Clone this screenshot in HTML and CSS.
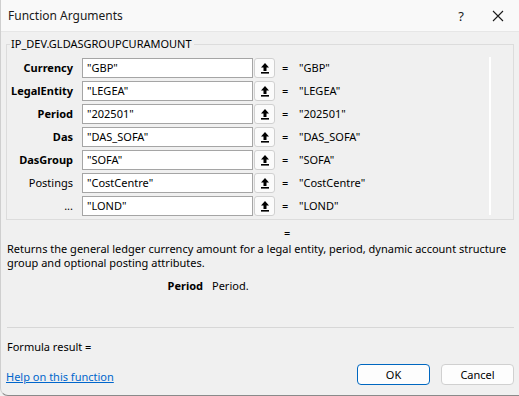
FILE: index.html
```html
<!DOCTYPE html>
<html>
<head>
<meta charset="utf-8">
<link rel="stylesheet" href="styles.css">
</head>
<body>
<div class="dialog">
  <div class="titlebar">
    <span class="title">Function Arguments</span>
    <span class="tb-help">?</span>
    <span class="tb-close"><svg width="12" height="12" viewBox="0 0 12 12"><path d="M1 1L11 11M11 1L1 11" stroke="#1a1a1a" stroke-width="1.1" fill="none"/></svg></span>
  </div>
  <div class="body">
    <fieldset class="group">
      <legend class="legend">IP_DEV.GLDASGROUPCURAMOUNT</legend>
      <div class="group-inner">
        <div class="args">
          <div class="lbl b">Currency</div><div class="inp">"GBP"</div><div class="btn"><svg width="10" height="12" viewBox="0 0 10 12"><path d="M5 1L1 5.5H3.5V9H6.5V5.5H9Z" fill="#000"/><rect x="1" y="10" width="8" height="1.6" fill="#000"/></svg></div><div class="eq">=</div><div class="val">"GBP"</div>
          <div class="lbl b">LegalEntity</div><div class="inp">"LEGEA"</div><div class="btn"><svg width="10" height="12" viewBox="0 0 10 12"><path d="M5 1L1 5.5H3.5V9H6.5V5.5H9Z" fill="#000"/><rect x="1" y="10" width="8" height="1.6" fill="#000"/></svg></div><div class="eq">=</div><div class="val">"LEGEA"</div>
          <div class="lbl b">Period</div><div class="inp">"202501"</div><div class="btn"><svg width="10" height="12" viewBox="0 0 10 12"><path d="M5 1L1 5.5H3.5V9H6.5V5.5H9Z" fill="#000"/><rect x="1" y="10" width="8" height="1.6" fill="#000"/></svg></div><div class="eq">=</div><div class="val">"202501"</div>
          <div class="lbl b">Das</div><div class="inp">"DAS_SOFA"</div><div class="btn"><svg width="10" height="12" viewBox="0 0 10 12"><path d="M5 1L1 5.5H3.5V9H6.5V5.5H9Z" fill="#000"/><rect x="1" y="10" width="8" height="1.6" fill="#000"/></svg></div><div class="eq">=</div><div class="val">"DAS_SOFA"</div>
          <div class="lbl b">DasGroup</div><div class="inp">"SOFA"</div><div class="btn"><svg width="10" height="12" viewBox="0 0 10 12"><path d="M5 1L1 5.5H3.5V9H6.5V5.5H9Z" fill="#000"/><rect x="1" y="10" width="8" height="1.6" fill="#000"/></svg></div><div class="eq">=</div><div class="val">"SOFA"</div>
          <div class="lbl">Postings</div><div class="inp">"CostCentre"</div><div class="btn"><svg width="10" height="12" viewBox="0 0 10 12"><path d="M5 1L1 5.5H3.5V9H6.5V5.5H9Z" fill="#000"/><rect x="1" y="10" width="8" height="1.6" fill="#000"/></svg></div><div class="eq">=</div><div class="val">"CostCentre"</div>
          <div class="lbl">...</div><div class="inp">"LOND"</div><div class="btn"><svg width="10" height="12" viewBox="0 0 10 12"><path d="M5 1L1 5.5H3.5V9H6.5V5.5H9Z" fill="#000"/><rect x="1" y="10" width="8" height="1.6" fill="#000"/></svg></div><div class="eq">=</div><div class="val">"LOND"</div>
        </div>
        <div class="scroll"></div>
      </div>
    </fieldset>
    <div class="result-eq">=</div>
    <div class="desc">Returns the general ledger currency amount for a legal entity, period, dynamic account structure group and optional posting attributes.</div>
    <div class="argdesc"><span class="argname">Period</span><span class="argtext">Period.</span></div>
    <div class="sep"></div>
    <div class="formula">Formula result =</div>
    <div class="footer">
      <a class="help" href="#">Help on this function</a>
      <div class="buttons">
        <div class="pbtn ok">OK</div>
        <div class="pbtn">Cancel</div>
      </div>
    </div>
  </div>
</div>
</body>
</html>
```

FILE: styles.css
```css
html, body {
  margin: 0;
  padding: 0;
  width: 519px;
  height: 396px;
  overflow: hidden;
  background: #f0f0f0;
}
.dialog {
  width: 519px;
  height: 396px;
  box-sizing: border-box;
  background: #f0f0f0;
  font-family: "Noto Sans", "Open Sans", sans-serif;
  font-size: 11px;
  color: #000;
  display: flex;
  flex-direction: column;
  border-bottom-left-radius: 8px;
  border-left: 1px solid #cfcfcf;
  border-bottom: 1px solid #8a8a8a;
}
.titlebar {
  height: 32px;
  flex: none;
  display: flex;
  align-items: center;
  background: #f9f9f9;
  padding-left: 7px;
  border-bottom: 1px solid #e6e6e6;
  box-sizing: border-box;
}
.title {
  flex: 1;
  font-size: 12px;
  color: #1a1a1a;
}
.tb-help {
  width: 20px;
  font-size: 13px;
  color: #1a1a1a;
  margin-right: 21px;
  text-align: center;
}
.tb-close {
  width: 12px;
  height: 12px;
  margin-right: 15px;
  display: flex;
}
.body {
  flex: 1;
  display: flex;
  flex-direction: column;
  padding: 0 5px 0 5px;
}
.group {
  margin: 5px 0 0 0;
  padding: 7px 0 3px 0;
  border: 1px solid #dcdcdc;
  min-width: 0;
}
.legend {
  padding: 0 2px 0 1px;
  margin-left: 3px;
  font-size: 11px;
  line-height: 14px;
}
.group-inner {
  display: flex;
}
.args {
  display: grid;
  grid-template-columns: 75px 171px 22px 24px auto;
  column-gap: 0;
  row-gap: 3px;
  align-items: center;
}
.lbl {
  text-align: right;
  padding-right: 9px;
  line-height: 20px;
  white-space: nowrap;
}
.b { font-weight: bold; }
.inp {
  height: 20px;
  box-sizing: border-box;
  border: 1px solid #a5a5a5;
  background: #fff;
  padding-left: 4px;
  line-height: 18px;
  white-space: nowrap;
}
.btn {
  height: 20px;
  box-sizing: border-box;
  margin-left: 1px;
  border: 1px solid #d0d0d0;
  border-radius: 3px;
  background: #fbfbfb;
  display: flex;
  align-items: center;
  justify-content: center;
}
.eq {
  text-align: left;
  padding-left: 7px;
  line-height: 20px;
}
.val {
  padding-left: 0;
  line-height: 20px;
  white-space: nowrap;
}
.scroll {
  margin-left: auto;
  margin-right: 22px;
  width: 2px;
  background: #fff;
  margin-top: -1px;
  margin-bottom: 1px;
}
.result-eq {
  margin-top: 7px;
  padding-left: 278px;
  line-height: 12px;
  height: 12px;
}
.desc {
  margin-top: 3px;
  padding-left: 1px;
  line-height: 14px;
  width: 505px;
}
.argdesc {
  margin-top: 9px;
  display: flex;
  line-height: 14px;
}
.argname {
  width: 197px;
  text-align: right;
  font-weight: bold;
}
.argtext {
  margin-left: 9px;
}
.sep {
  margin-top: 34px;
  height: 1px;
  background: #d7d7d7;
  margin-left: 1px;
}
.formula {
  margin-top: 12px;
  padding-left: 1px;
  line-height: 14px;
}
.footer {
  margin-top: 10px;
  display: flex;
  align-items: flex-start;
}
.help {
  margin-top: 6px;
  color: #0066cc;
  text-decoration: underline;
  line-height: 14px;
}
.buttons {
  margin-left: auto;
  display: flex;
  gap: 11px;
}
.pbtn {
  width: 73px;
  height: 21px;
  box-sizing: border-box;
  border: 1px solid #d0d0d0;
  border-radius: 4px;
  background: #fdfdfd;
  text-align: center;
  line-height: 19px;
}
.ok {
  border: 1px solid #0067c0;
}
```
